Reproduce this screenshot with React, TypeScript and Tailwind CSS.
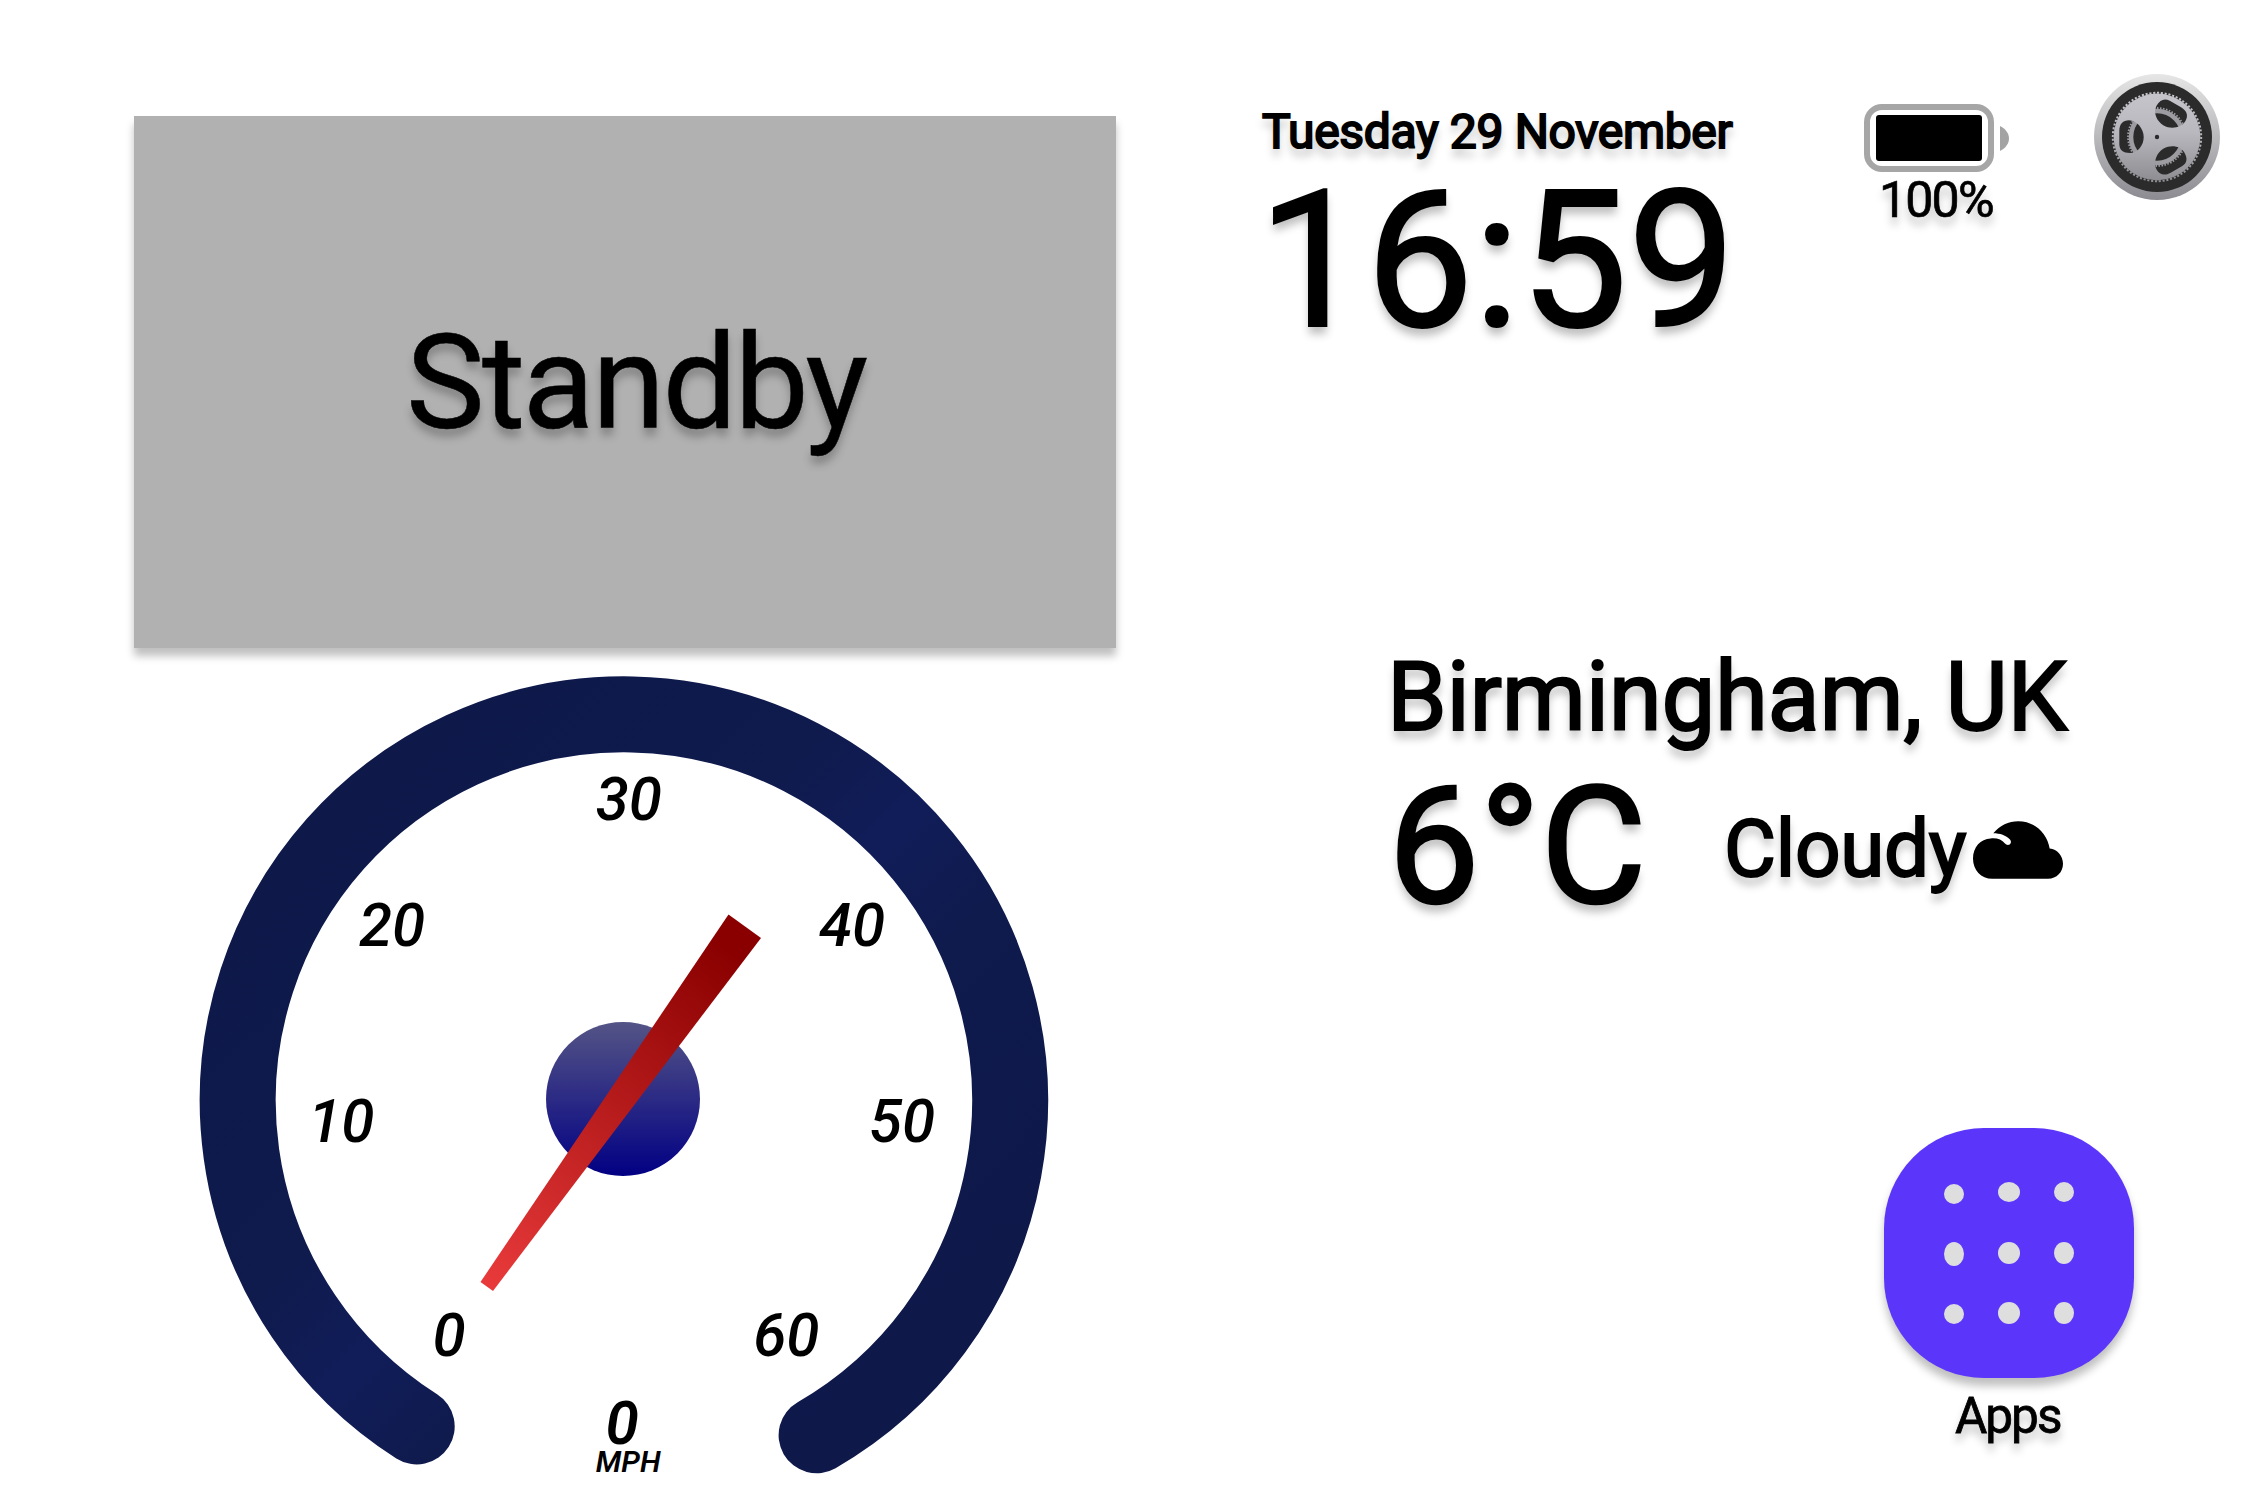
import React from "react";

const FONT = "font-['Roboto','Liberation_Sans',sans-serif]";
const SHADOW = "[text-shadow:0_8px_8px_rgba(0,0,0,0.25)]";

const dialLabels = [
  { text: "0", x: 432.6, y: 1355.5 },
  { text: "10", x: 308.2, y: 1142 },
  { text: "20", x: 359, y: 946.3 },
  { text: "30", x: 595.8, y: 820 },
  { text: "40", x: 819, y: 946.3 },
  { text: "50", x: 869, y: 1142 },
  { text: "60", x: 753.2, y: 1356 },
];

function Speedometer() {
  return (
    <svg
      className={`block h-[840px] w-[982px] ${FONT}`}
      viewBox="134 648 982 840"
      aria-label="Speedometer"
    >
      <defs>
        <linearGradient id="ring" gradientUnits="userSpaceOnUse" x1="324" y1="799" x2="924" y2="1399">
          <stop offset="0" stopColor="#0e194a" />
          <stop offset="0.36" stopColor="#0f1a4d" />
          <stop offset="0.5" stopColor="#111d59" />
          <stop offset="0.64" stopColor="#0f1a4d" />
          <stop offset="1" stopColor="#0e1849" />
        </linearGradient>
        <linearGradient id="hub" x1="0" y1="0" x2="0" y2="1">
          <stop offset="0" stopColor="#545486" />
          <stop offset="1" stopColor="#020083" />
        </linearGradient>
        <linearGradient id="needle" gradientUnits="userSpaceOnUse" x1="728" y1="950" x2="487" y2="1287">
          <stop offset="0" stopColor="#8a0000" />
          <stop offset="1" stopColor="#e93a3b" />
        </linearGradient>
      </defs>
      <path
        d="M416.7 1426.4 A386.2 386.2 0 1 1 816.6 1435.2"
        fill="none"
        stroke="url(#ring)"
        strokeWidth="76"
        strokeLinecap="round"
      />
      <circle cx="623" cy="1099" r="77" fill="url(#hub)" />
      <path d="M728.5 914.5 L761 938 L493 1291 L480.5 1282 Z" fill="url(#needle)" />
      <g fontSize="60" fontStyle="italic" fontWeight="500">
        {dialLabels.map((l) => (
          <text key={l.text} x={l.x} y={l.y}>
            {l.text}
          </text>
        ))}
        <text x="605.5" y="1443.5" fontWeight="600">0</text>
        <text x="595.8" y="1472" fontSize="30" fontWeight="600">MPH</text>
      </g>
    </svg>
  );
}

function Battery() {
  return (
    <div className="ml-[131px] mt-[104px] flex w-[146px] flex-col">
      <div className="flex items-center gap-[6px]">
        <div className="h-[68px] w-[130px] shrink-0 rounded-[18px] border-[6px] border-[#a6a6a6] px-[6px] py-[5px]">
          <div className="h-full w-full rounded-[3px] bg-black" />
        </div>
        <svg className="h-[25px] w-[9px] shrink-0" viewBox="0 0 9 25">
          <path d="M0 0 C6 3 9 8 9 12.5 S6 22 0 25 Z" fill="#a3a3a3" />
        </svg>
      </div>
      <span
        className={`ml-[15px] mt-[1px] whitespace-nowrap text-[50px] leading-[54px] tracking-[-1.8px] [-webkit-text-stroke:0.7px_black] ${SHADOW}`}
      >
        100%
      </span>
    </div>
  );
}

const SLOT =
  "M-28 -16.7 C-20 -16.7 -13.3 -8 -13.3 0 C-13.3 8 -19 16 -27 16 C-34 16 -37.7 13 -37.7 7 V-6 C-37.7 -13 -34 -16.7 -28 -16.7 Z";

function SettingsGear() {
  return (
    <svg className="ml-[84px] mt-[74px] h-[126px] w-[126px] shrink-0" viewBox="-63 -63 126 126" aria-label="Settings">
      <defs>
        <linearGradient id="rim" x1="0" y1="0" x2="0" y2="1">
          <stop offset="0" stopColor="#e6e6e6" />
          <stop offset="1" stopColor="#8c8b91" />
        </linearGradient>
        <linearGradient id="wheel" gradientUnits="userSpaceOnUse" x1="0" y1="-45" x2="0" y2="45">
          <stop offset="0" stopColor="#c6c5cb" />
          <stop offset="0.45" stopColor="#b9b8be" />
          <stop offset="1" stopColor="#8d8c91" />
        </linearGradient>
        <mask id="slots" maskUnits="userSpaceOnUse" x="-63" y="-63" width="126" height="126">
          <rect x="-63" y="-63" width="126" height="126" fill="#fff" />
          <path d={SLOT} fill="#000" />
          <path d={SLOT} fill="#000" transform="rotate(120)" />
          <path d={SLOT} fill="#000" transform="rotate(240)" />
          <circle r="2.2" fill="#000" />
        </mask>
      </defs>
      <circle r="63" fill="url(#rim)" />
      <circle r="55" fill="#2b2b2b" />
      <circle r="26" fill="none" stroke="#9d9ca1" strokeWidth="4.6" />
      <circle r="29" fill="none" stroke="#9d9ca1" strokeWidth="1.8" pathLength="120" strokeDasharray="1 1" />
      <g mask="url(#slots)">
        <circle r="43.4" fill="url(#wheel)" />
        <circle r="44.2" fill="none" stroke="url(#wheel)" strokeWidth="2" pathLength="144" strokeDasharray="1.1 0.9" />
      </g>
    </svg>
  );
}

function CloudIcon() {
  return (
    <svg className="mt-[64px] h-[58px] w-[90px] shrink-0" viewBox="39 48 270 173">
      <path d="M100 84 C120 60 145 48 175 48 C225 48 262 85 269 130 C292 132 309 152 309 176 C309 201 290 221 264 221 H97 C63 221 39 195 39 160 C39 126 62 101 92 100 C112 98 125 104 135 115 C138 119 144 121 149 118 C154 114 154 108 150 103 C138 90 120 84 100 84 Z" />
    </svg>
  );
}

const dots = [
  [70, 66, 10, 10], [125, 64, 11, 10], [180, 64, 10, 10],
  [70, 126, 10, 12], [125, 125, 11, 11], [180, 125, 10, 11],
  [70, 186, 10, 10], [125, 185, 11, 11], [180, 185, 10, 11],
];

function AppsButton() {
  return (
    <div className="ml-[768px] mt-[191px] flex w-[250px] flex-col">
      <div className="h-[250px] w-[250px] rounded-[100px] bg-[#5c35fb] shadow-[0_8px_8px_rgba(0,0,0,0.25)]">
        <svg className="h-full w-full" viewBox="0 0 250 250">
          {dots.map(([cx, cy, rx, ry]) => (
            <ellipse key={`${cx}-${cy}`} cx={cx} cy={cy} rx={rx} ry={ry} fill="#dedede" />
          ))}
        </svg>
      </div>
      <span
        className={`ml-[71px] mt-[11px] text-[49.5px] leading-[54px] tracking-[-2px] [-webkit-text-stroke:0.8px_black] ${SHADOW}`}
      >
        Apps
      </span>
    </div>
  );
}

export default function App() {
  return (
    <main className={`flex h-[1488px] w-[2266px] overflow-hidden bg-white text-black ${FONT}`}>
      <section className="w-[1116px] shrink-0 pl-[134px] pt-[116px]">
        <div className="h-[532px] w-[982px] bg-[#b1b1b1] pl-[272px] pt-[187px] shadow-[0_8px_8px_rgba(0,0,0,0.25)]">
          <h1
            className={`whitespace-nowrap text-[132.5px] leading-[160px] tracking-[-2.7px] [-webkit-text-stroke:0.5px_black] ${SHADOW}`}
          >
            Standby
          </h1>
        </div>
        <Speedometer />
      </section>

      <section className="w-[1150px] shrink-0">
        <header className="flex h-[641px] items-start">
          <div className="ml-[142px] mt-[102px] w-[475px] shrink-0">
            <p
              className={`ml-[4px] whitespace-nowrap text-[48px] leading-[60px] tracking-[-0.34px] [-webkit-text-stroke:2px_black] ${SHADOW}`}
            >
              Tuesday 29 November
            </p>
            <p
              className={`mt-[1px] whitespace-nowrap text-[192px] leading-[196px] tracking-[-0.1px] [-webkit-text-stroke:2px_black] ${SHADOW}`}
            >
              16:59
            </p>
          </div>
          <Battery />
          <SettingsGear />
        </header>

        <div className="ml-[271px]">
          <p
            className={`whitespace-nowrap text-[96px] leading-[112px] tracking-[-0.3px] [-webkit-text-stroke:2px_black] ${SHADOW}`}
          >
            Birmingham, UK
          </p>
          <div className="mt-[4px] flex h-[180px] items-start pl-px">
            <p
              className={`w-[336px] shrink-0 text-[163px] leading-[180px] [-webkit-text-stroke:2.5px_black] ${SHADOW}`}
            >
              6°C
            </p>
            <p
              className={`mt-[44px] w-[249px] shrink-0 text-[80px] leading-[96px] tracking-[-0.3px] [-webkit-text-stroke:2px_black] ${SHADOW}`}
            >
              Cloudy
            </p>
            <CloudIcon />
          </div>
        </div>

        <AppsButton />
      </section>
    </main>
  );
}
